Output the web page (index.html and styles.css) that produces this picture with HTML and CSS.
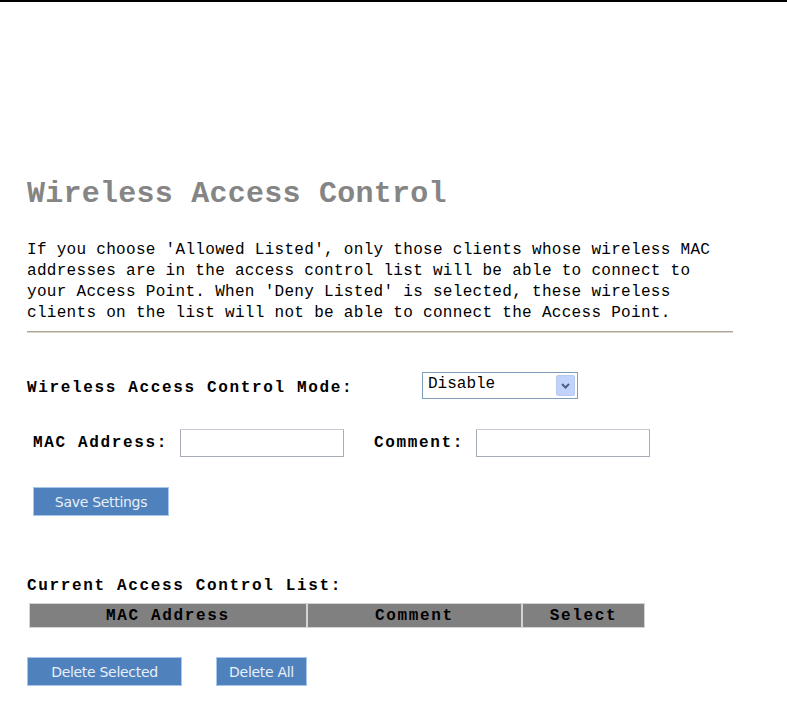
FILE: index.html
```html
<!DOCTYPE html>
<html lang="en">
<head>
    <meta charset="UTF-8">
    <title>Wireless Access Control</title>
    <link rel="stylesheet" href="styles.css">
</head>
<body>
    <div class="topbar"></div>
    <div class="page">
        <h1 class="title">Wireless Access Control</h1>
        <p class="intro">If you choose 'Allowed Listed', only those clients whose wireless MAC
addresses are in the access control list will be able to connect to
your Access Point. When 'Deny Listed' is selected, these wireless
clients on the list will not be able to connect the Access Point.</p>
        <div class="divider"></div>

        <div class="row mode-row">
            <label class="lbl mode-lbl">Wireless Access Control Mode:</label>
            <div class="select">
                <span class="select-text">Disable</span>
                <span class="select-btn">
                    <svg width="9" height="6" viewBox="0 0 9 6"><path d="M1 1 L4.5 4.5 L8 1" fill="none" stroke="#4d6185" stroke-width="2"/></svg>
                </span>
            </div>
        </div>

        <div class="row mac-row">
            <label class="lbl">MAC Address:</label>
            <input class="field mac-field" type="text">
            <label class="lbl comment-lbl">Comment:</label>
            <input class="field comment-field" type="text">
        </div>

        <div class="row save-row">
            <button class="btn save-btn">Save Settings</button>
        </div>

        <div class="lbl list-title">Current Access Control List:</div>
        <table class="acl">
            <tr>
                <th class="col-mac">MAC Address</th>
                <th class="col-comment">Comment</th>
                <th class="col-select">Select</th>
            </tr>
        </table>

        <div class="row delete-row">
            <button class="btn del-sel">Delete Selected</button>
            <button class="btn del-all">Delete All</button>
        </div>
    </div>
</body>
</html>
```

FILE: styles.css
```css
* {
    box-sizing: border-box;
}

body {
    margin: 0;
    background: #ffffff;
    color: #000000;
    font-family: "Liberation Mono", "DejaVu Sans Mono", monospace;
}

.topbar {
    height: 2px;
    background: #000000;
}

.page {
    padding-left: 27px;
}

.title {
    margin: 174px 0 0 0;
    font-size: 30px;
    line-height: 36px;
    letter-spacing: 0.25px;
    font-weight: bold;
    color: #858585;
}

.intro {
    margin: 28px 0 0 0;
    white-space: pre;
    font-size: 16px;
    letter-spacing: 0.3px;
    line-height: 21px;
}

.divider {
    width: 706px;
    margin-top: 7px;
    border-top: 1px solid #aca899;
    border-bottom: 1px solid #d8d5c8;
}

.row {
    display: flex;
    align-items: center;
}

.lbl {
    font-size: 16px;
    font-weight: bold;
    letter-spacing: 1.65px;
}

.mode-row {
    margin-top: 39px;
    height: 27px;
}

.mode-lbl {
    width: 395px;
    padding-top: 5px;
}

.select {
    display: flex;
    align-items: center;
    justify-content: space-between;
    width: 156px;
    height: 27px;
    border: 1px solid #7f9db9;
    padding: 0 2px 0 5px;
}

.select-text {
    font-size: 16px;
    padding-bottom: 3px;
}

.select-btn {
    display: flex;
    align-items: center;
    justify-content: center;
    width: 19px;
    height: 21px;
    background: #c1d3fb;
    border: 1px solid #b9c9ef;
    border-radius: 2px;
}

.mac-row {
    margin-top: 30px;
    height: 28px;
    padding-left: 6px;
}

.field {
    height: 28px;
    border: 1px solid #a5acb5;
    border-top-color: #c5ccd6;
    background: #ffffff;
}

.mac-field {
    width: 164px;
    margin-left: 12px;
}

.comment-lbl {
    margin-left: 30px;
}

.comment-field {
    width: 174px;
    margin-left: 12px;
}

.btn {
    height: 29px;
    background: #4f81bd;
    border: 1px solid #a7c6ee;
    color: #e9eff7;
    font-family: "DejaVu Sans", "Liberation Sans", sans-serif;
    font-size: 14px;
    letter-spacing: -0.3px;
    padding: 0;
    cursor: pointer;
}

.save-row {
    margin-top: 30px;
    padding-left: 6px;
}

.save-btn {
    width: 136px;
}

.list-title {
    margin-top: 60px;
    line-height: 20px;
}

.acl {
    margin-top: 7px;
    margin-left: 2px;
    border-collapse: separate;
    border-spacing: 0;
}

.acl th {
    height: 25px;
    padding: 0;
    background: #808080;
    border: 1px solid #d4d4d4;
    font-size: 16px;
    font-weight: bold;
    letter-spacing: 1.65px;
    text-align: center;
}

.col-mac {
    width: 278px;
}

.col-comment {
    width: 215px;
}

.col-select {
    width: 123px;
}

.delete-row {
    margin-top: 29px;
    gap: 34px;
}

.del-sel {
    width: 155px;
}

.del-all {
    width: 91px;
}
```
